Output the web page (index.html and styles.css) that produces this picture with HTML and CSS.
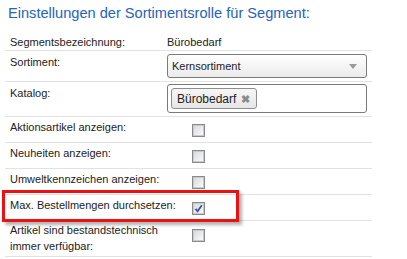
FILE: index.html
```html
<!DOCTYPE html>
<html lang="de">
<head>
    <meta charset="UTF-8">
    <title>Einstellungen der Sortimentsrolle</title>
    <link rel="stylesheet" href="styles.css">
</head>
<body>
    <div class="panel">
        <h1 class="title">Einstellungen der Sortimentsrolle für Segment:</h1>

        <div class="form">
            <div class="row row-first">
                <div class="label">Segmentsbezeichnung:</div>
                <div class="value">Bürobedarf</div>
            </div>
            <div class="row row-select">
                <div class="label">Sortiment:</div>
                <div class="value">
                    <div class="select">
                        <span>Kernsortiment</span>
                        <span class="arrow"></span>
                    </div>
                </div>
            </div>
            <div class="row row-tags">
                <div class="label">Katalog:</div>
                <div class="value">
                    <div class="tag-input">
                        <span class="tag">Bürobedarf <span class="tag-x">✖</span></span>
                    </div>
                </div>
            </div>
            <div class="row">
                <div class="label">Aktionsartikel anzeigen:</div>
                <div class="value"><span class="check"></span></div>
            </div>
            <div class="row">
                <div class="label">Neuheiten anzeigen:</div>
                <div class="value"><span class="check"></span></div>
            </div>
            <div class="row">
                <div class="label">Umweltkennzeichen anzeigen:</div>
                <div class="value"><span class="check"></span></div>
            </div>
            <div class="row">
                <div class="label nowrap">Max. Bestellmengen durchsetzen:</div>
                <div class="value">
                    <span class="check checked">
                        <svg width="9" height="9" viewBox="0 0 9 9"><path d="M1.5 4.8 L3.6 7.2 L7.8 1.2" fill="none" stroke="#3457a8" stroke-width="1.8"/></svg>
                    </span>
                </div>
            </div>
            <div class="row row-last">
                <div class="label">Artikel sind bestandstechnisch immer verfügbar:</div>
                <div class="value"><span class="check"></span></div>
            </div>
        </div>

        <!-- highlight marker -->
        <div class="highlight"></div>
    </div>
</body>
</html>
```

FILE: styles.css
```css
/* Page */
body {
    margin: 0;
    background: #fff;
    font-family: 'Liberation Sans', Arial, sans-serif;
    font-size: 11px;
    color: #222;
}

.panel {
    position: relative;
    width: 407px;
    height: 259px;
    overflow: hidden;
}

/* Title */
.title {
    margin: 0;
    padding: 5px 0 0 8px;
    height: 25px;
    font-size: 14.6px;
    font-weight: normal;
    line-height: 17px;
    color: #2563c0;
}

/* Form rows */
.form {
    width: 367px;
    margin-left: 5px;
}

.row {
    display: flex;
    min-height: 25px;
    border-bottom: 1px solid #e2e2e2;
}

.row-first {
    min-height: 20px;
}

.row-first .label,
.row-first .value {
    padding-top: 4px;
}

.label {
    width: 162px;
    flex: none;
    padding: 2px 0 0 5px;
    line-height: 16px;
    box-sizing: border-box;
}

.label.nowrap {
    white-space: nowrap;
}

.row-last .label {
    padding-top: 1px;
    padding-bottom: 2px;
}

.value {
    flex: 1;
    padding-top: 2px;
    line-height: 16px;
}

/* Select */
.row-select {
    min-height: 30px;
}

.row-select .label {
    padding-top: 3px;
}

.row-select .value,
.row-tags .value {
    flex: none;
    width: 200px;
}

.row-select .value {
    padding-top: 3px;
}

.select {
    display: flex;
    align-items: center;
    justify-content: space-between;
    height: 24px;
    padding: 0 9px 0 4px;
    border: 1px solid #7a7a7a;
    border-radius: 3px;
    box-sizing: border-box;
    background: linear-gradient(#ffffff, #ebebeb);
    font-size: 11px;
}

.arrow {
    width: 0;
    height: 0;
    border-left: 4px solid transparent;
    border-right: 4px solid transparent;
    border-top: 5px solid #9a9a9a;
}

/* Tag input */
.row-tags {
    min-height: 34px;
}

.row-tags .label {
    padding-top: 3px;
}

.tag-input {
    display: flex;
    align-items: center;
    height: 29px;
    padding: 0 3px;
    border: 1px solid #7a7a7a;
    border-radius: 3px;
    box-sizing: border-box;
    background: #fff;
}

.tag {
    display: inline-flex;
    align-items: center;
    gap: 5px;
    height: 21px;
    padding: 0 6px 0 5px;
    border: 1px solid #8e8e8e;
    border-radius: 3px;
    box-sizing: border-box;
    background: linear-gradient(#f6f6f6, #e6e6e6);
    font-size: 12px;
}

.tag-x {
    color: #8a8a8a;
    font-size: 11px;
    font-weight: bold;
}

/* Checkboxes */
.check {
    display: flex;
    align-items: center;
    justify-content: center;
    width: 13px;
    height: 13px;
    margin: 5px 0 0 25px;
    border: 1px solid #8a8a8a;
    box-sizing: border-box;
    box-shadow: inset 0 0 0 1px #c9c9c9;
    background: linear-gradient(135deg, #d5d7db, #fdfdfd);
}

.row-last .check {
    margin-top: 6px;
}

/* Red highlight around the row */
.highlight {
    position: absolute;
    left: 2px;
    top: 190px;
    width: 237px;
    height: 32px;
    border: 3px solid #ee1111;
    box-sizing: border-box;
    box-shadow: 3px 3px 3px rgba(0, 0, 0, 0.3);
}
```
